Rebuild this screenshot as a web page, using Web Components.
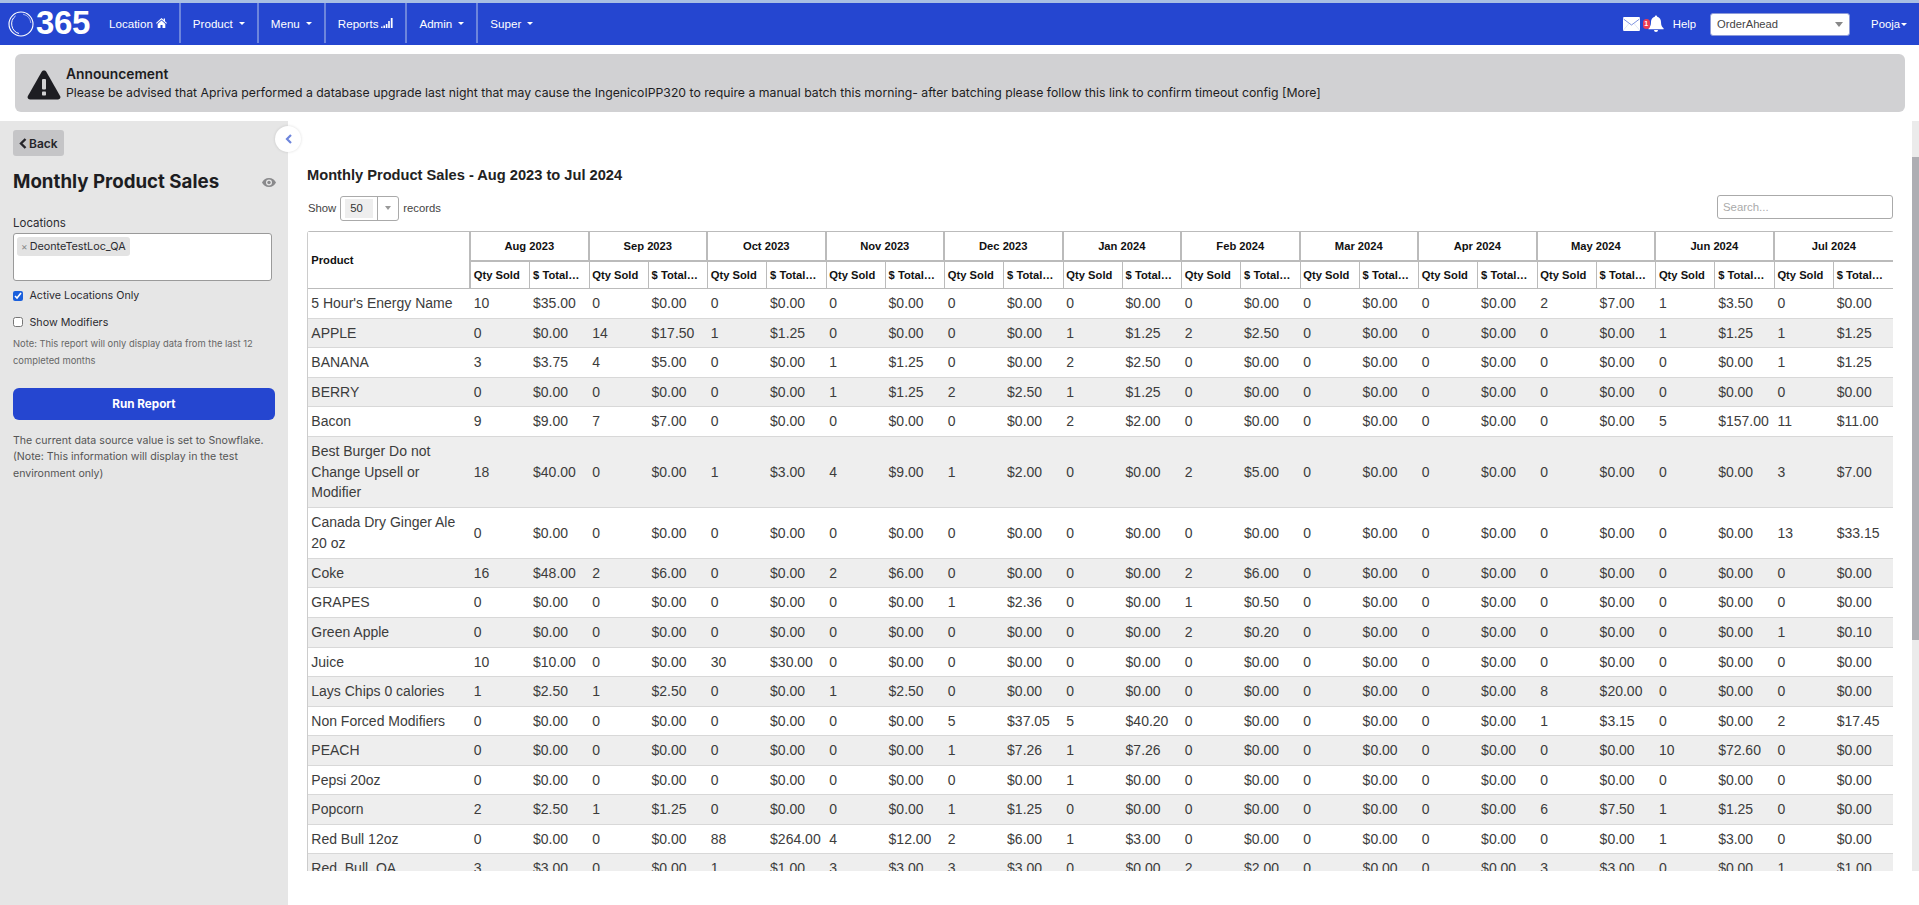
<!DOCTYPE html>
<html lang="en"><head><meta charset="utf-8"><title>Monthly Product Sales</title>
<style>
html,body{margin:0;padding:0;background:#fff;overflow:hidden}
body{font-family:"Liberation Sans",Arial,sans-serif}
</style></head>
<body>
<app-shell>
  <app-navbar slot="nav">
    <nav-link slot="links" icon="home">Location</nav-link>
    <nav-link slot="links" caret>Product</nav-link>
    <nav-link slot="links" caret>Menu</nav-link>
    <nav-link slot="links" icon="bars">Reports</nav-link>
    <nav-link slot="links" caret>Admin</nav-link>
    <nav-link slot="links" caret last>Super</nav-link>
  </app-navbar>
  <announcement-banner slot="notice" heading="Announcement">Please be advised that Apriva performed a database upgrade last night that may cause the IngenicoIPP320 to require a manual batch this morning- after batching please follow this link to confirm timeout config [More]</announcement-banner>
  <report-sidebar slot="side"></report-sidebar>
  <report-main slot="main"></report-main>
</app-shell>
<script>
function def(name, css, html, init){
  customElements.define(name, class extends HTMLElement{
    connectedCallback(){
      if(this.shadowRoot) return;
      const r=this.attachShadow({mode:'open'});
      r.innerHTML='<style>'+css+'</style>'+(typeof html==='function'?html(this):html);
      if(init) init(this,r);
    }
  });
}
def('app-shell',`
:host{display:flex;flex-direction:column;width:1919px;height:905px;overflow:hidden;background:#fff}
.body{flex:1;display:flex;min-height:0;position:relative}
`,`<slot name="nav"></slot><slot name="notice"></slot><div class="body"><slot name="side"></slot><slot name="main"></slot><collapse-button></collapse-button></div>`);

def('collapse-button',`
:host{position:absolute;left:275px;top:5px;width:26px;height:26px;border-radius:50%;background:#fff;box-shadow:0 0 3px rgba(0,0,0,.14);display:flex;align-items:center;justify-content:center}
svg{display:block;margin-left:1px}
`,`<svg width="8" height="10" viewBox="0 0 8 10"><polyline points="6,1 2,5 6,9" fill="none" stroke="#6d85dc" stroke-width="2.2"/></svg>`);

def('app-navbar',`
:host{display:flex;align-items:stretch;height:42px;border-top:3px solid #a9bfe3;background:#2546d0;color:#fff;font:11.3px "Liberation Sans",Arial,sans-serif;box-sizing:content-box}
.logo{width:97px;display:flex;align-items:center;padding-left:8px;box-sizing:border-box;gap:2px}
.logo span{font:bold 33px/1 "Liberation Sans",Arial,sans-serif;letter-spacing:-.4px;margin-top:-4px}
.links{display:flex;align-items:stretch;height:40px}
.sp{flex:1}
.right{display:flex;align-items:center;height:42px}
.mail{margin-left:0;display:block}
.bell{position:relative;width:16px;height:17px;margin-left:8px;margin-top:-2px}
.badge{position:absolute;left:-5px;top:4px;width:7px;height:10px;border-radius:3.5px;background:#ee3b52;color:#fff;font:bold 7px/10px "Liberation Sans",Arial,sans-serif;text-align:center}
.help{margin-left:9px;font-size:11.4px}
.sel{margin-left:14px;width:140px;height:23px;background:#fff;border:1px solid #8d9bd9;border-radius:3px;box-sizing:border-box;color:#444;display:flex;align-items:center;justify-content:space-between;padding:0 6px 0 6px;font-size:11.2px}
.sel i{width:0;height:0;border:4px solid transparent;border-top:5px solid #888;border-bottom:0}
.user{margin-left:21px;margin-right:12px;display:flex;align-items:center;gap:1px;font-size:11.3px}
.user i{width:0;height:0;border:3px solid transparent;border-top:3px solid #fff;border-bottom:0}
`,`<div class="logo"><svg width="26" height="26" viewBox="0 0 26 26" fill="none" stroke="#fff"><circle cx="13" cy="13" r="12" stroke-width="1.1"/><path d="M7.500 5A10 10 0 0 0 11 22.500" stroke-width="1"/><path d="M15 3.200A10 10 0 0 1 22.800 12" stroke-width=".7" opacity=".8"/></svg><span>365</span></div>
<div class="links"><slot name="links"></slot></div><div class="sp"></div>
<div class="right">
<svg class="mail" width="17" height="14" viewBox="0 0 17 14"><rect width="17" height="14" rx="1.2" fill="#fff"/><polyline points="0.5,2 8.5,8 16.5,2" fill="none" stroke="#6d85dc" stroke-width=".9"/><path d="M.5 13L6 6.5M16.5 13L11 6.5" stroke="#c5cfef" stroke-width=".5"/></svg>
<div class="bell"><svg width="16" height="17" viewBox="0 0 16 17"><path d="M8 0.5a1.2 1.2 0 0 1 1.2 1.3C11.8 2.4 13 4.6 13 7c0 3.6 1 4.8 2.6 6.3v.9H.4v-.9C2 11.8 3 10.6 3 7c0-2.4 1.2-4.6 3.8-5.2A1.2 1.2 0 0 1 8 .5z" fill="#fff"/><path d="M6 15h4a2 2 0 0 1-4 0z" fill="#fff"/></svg><div class="badge">1</div></div>
<span class="help">Help</span>
<div class="sel"><span>OrderAhead</span><i></i></div>
<div class="user"><span>Pooja</span><i></i></div>
</div>`);

def('nav-link',`
:host{display:flex;align-items:center;padding:0 12px 0 12px;border-right:2px solid #6d85dc;gap:3px;font-size:11.6px;white-space:nowrap}
:host([last]){border-right:0}
.caret{width:0;height:0;border:3px solid transparent;border-top:3px solid #fff;border-bottom:0;margin-left:3px}
svg{display:block}
`,h=>{
 let x='<slot></slot>';
 if(h.hasAttribute('caret')) x+='<i class="caret"></i>';
 if(h.getAttribute('icon')==='home') x+='<svg width="11" height="10" viewBox="0 0 11 10"><path d="M5.5 0L0 5l.7.7L5.5 1.500l4.800 4.200.7-.7-2-1.800V.6H7.700v1.300zM1.700 6v4h2.800V7h2v3h2.800V6L5.500 2.600z" fill="#fff"/></svg>';
 if(h.getAttribute('icon')==='bars') x+='<svg width="12" height="10" viewBox="0 0 12 10" fill="#fff"><rect x="0" y="8.500" width="1.600" height="1.500" opacity=".85"/><rect x="2.400" y="7.500" width="1.600" height="2.500"/><rect x="4.800" y="6" width="1.600" height="4"/><rect x="7.200" y="3" width="1.600" height="7"/><rect x="9.800" y="0" width="1.800" height="10"/></svg>';
 return x;
});

def('announcement-banner',`
:host{display:flex;align-items:center;height:58px;margin:9px 14px 9px 15px;background:#d1d1d3;border-radius:6px;padding-left:12px;box-sizing:border-box;color:#1d1d22;font-family:Inter,"Liberation Sans",sans-serif}
svg{flex:none;margin-right:5px;margin-top:3px}
h4{margin:0 0 1px;font-size:13.8px;font-weight:600;line-height:18px}
div{font-size:12.25px;line-height:18px;white-space:nowrap}
`,h=>`<svg width="34" height="31" viewBox="0 0 34 31"><path d="M17 1.500c1 0 1.800.5 2.300 1.300l13.800 24.300c1 1.800-.2 3.400-2.200 3.400H3.100c-2 0-3.200-1.600-2.200-3.400L14.700 2.800c.5-.8 1.300-1.300 2.300-1.300z" fill="#1d1d22"/><rect x="15" y="10" width="4" height="10.500" rx="1" fill="#d1d1d3"/><rect x="15" y="22.500" width="4" height="4" rx=".8" fill="#d1d1d3"/></svg><section><h4>${h.getAttribute('heading')}</h4><div><slot></slot></div></section>`);

def('report-sidebar',`
:host{display:block;flex:none;width:288px;height:784px;background:#e6e6e6;box-sizing:border-box;padding:9px 13px;color:#2b2b30;font:12px Inter,"Liberation Sans",sans-serif}
.back{display:inline-flex;align-items:center;gap:2px;height:26px;width:51px;box-sizing:border-box;padding-left:6px;background:#c5c5c7;border-radius:3px;font-weight:600;font-size:12px;color:#25252a}
h1{display:flex;justify-content:space-between;align-items:center;margin:14px -1px 0 0;font-size:18.7px;line-height:24px;font-weight:700;color:#1d1d22}
label.t{display:block;margin-top:22px;font-size:11.500px;line-height:15px}
.box{margin-top:1.500px;width:259px;height:48px;background:#fff;border:1px solid #9a9a9a;border-radius:3px;box-sizing:border-box;padding:3px}
.tag{display:inline-flex;align-items:center;height:19px;padding:0 4px;background:#e3e3e3;border-radius:3px;font-size:10.8px;color:#2b2b30;gap:2px}
.tag b{color:#888;font-weight:400;font-size:10px}
.chk{display:flex;align-items:center;gap:6.500px;height:16px;font-size:10.7px}
.chk input{width:10px;height:10px;margin:0;accent-color:#1a5fdc}
.c1{margin-top:7px}.c2{margin-top:10.500px}
.note{margin:4.500px 0 0;font-size:9.4px;line-height:17px;color:#666}
.run{display:block;margin-top:19.500px;height:32px;width:262px;line-height:32px;text-align:center;background:#2546d0;color:#fff;font-weight:700;font-size:11.7px;border-radius:6px}
.info{margin:12.700px 0 0;font-size:10.6px;line-height:16.500px;color:#555;width:262px}
`,`<div class="back"><svg width="8" height="11" viewBox="0 0 8 11"><polyline points="6.500,1 2,5.500 6.500,10" fill="none" stroke="#25252a" stroke-width="2.400"/></svg><span>Back</span></div>
<h1><span>Monthly Product Sales</span><svg width="14" height="9" viewBox="0 0 14 9"><path d="M7 0C3.800 0 1.200 1.900 0 4.500 1.200 7.100 3.800 9 7 9s5.800-1.900 7-4.500C12.800 1.900 10.200 0 7 0zm0 7.500a3 3 0 1 1 0-6 3 3 0 0 1 0 6z" fill="#8a8a8c"/><circle cx="7" cy="4.500" r="1.700" fill="#8a8a8c"/></svg></h1>
<label class="t">Locations</label>
<div class="box"><span class="tag"><b>×</b>DeonteTestLoc_QA</span></div>
<label class="chk c1"><input type="checkbox" checked><span>Active Locations Only</span></label>
<label class="chk c2"><input type="checkbox"><span>Show Modifiers</span></label>
<p class="note">Note: This report will only display data from the last 12 completed months</p>
<div class="run">Run Report</div>
<p class="info">The current data source value is set to Snowflake. (Note: This information will display in the test environment only)</p>`);

def('report-main',`
:host{display:flex;flex:1;min-width:0;height:750px;font-family:"Liberation Sans",Arial,sans-serif}
.col{flex:1;min-width:0;display:flex;flex-direction:column;padding:44px 19px 0 19px;box-sizing:border-box}
h2{margin:0;font-size:14.65px;line-height:20px;font-weight:700;color:#222}
.ctl{display:flex;justify-content:space-between;align-items:flex-start;margin-top:10px;height:26px;font-size:11.300px;color:#444}
.len{display:flex;align-items:center;height:26px;gap:4px;margin-left:1px}
.dd{display:flex;align-items:center;width:59px;height:25px;box-sizing:border-box;border:1px solid #aaa;border-radius:3px;background:#fff}
.dd .v{width:28px;height:19px;line-height:18px;margin-left:4px;background:#eee;padding-left:5px;box-sizing:border-box;color:#333}
.dd .a{margin-left:4px;border-left:1px solid #aaa;height:23px;flex:1;display:flex;align-items:center;justify-content:center}
.dd i{width:0;height:0;border:3px solid transparent;border-top:4px solid #999;border-bottom:0}
.search{width:176px;height:24px;box-sizing:border-box;border:1px solid #aaa;border-radius:3px;padding-left:5px;line-height:22px;color:#aaa;font-size:11.400px;background:#fff}
.wrap{margin-top:10px;flex:1;min-height:0;overflow:hidden}
.track{flex:none;width:7px;height:750px;background:#ebebeb;padding-top:36px;box-sizing:border-box}
.thumb{height:483px;background:#aeaeb3}
`,`<div class="col"><h2>Monthly Product Sales - Aug 2023 to Jul 2024</h2>
<div class="ctl"><div class="len"><span>Show</span><div class="dd"><span class="v">50</span><span class="a"><i></i></span></div><span>records</span></div><div class="search">Search...</div></div>
<div class="wrap"><sales-table></sales-table></div></div><div class="track"><div class="thumb"></div></div>`);

const months=['Aug 2023','Sep 2023','Oct 2023','Nov 2023','Dec 2023','Jan 2024','Feb 2024','Mar 2024','Apr 2024','May 2024','Jun 2024','Jul 2024'];
const rows=[
["5 Hour's Energy Name",{0:[10,'35.00'],9:[2,'7.00'],10:[1,'3.50']}],
["APPLE",{1:[14,'17.50'],2:[1,'1.25'],5:[1,'1.25'],6:[2,'2.50'],10:[1,'1.25'],11:[1,'1.25']}],
["BANANA",{0:[3,'3.75'],1:[4,'5.00'],3:[1,'1.25'],5:[2,'2.50'],11:[1,'1.25']}],
["BERRY",{3:[1,'1.25'],4:[2,'2.50'],5:[1,'1.25']}],
["Bacon",{0:[9,'9.00'],1:[7,'7.00'],5:[2,'2.00'],10:[5,'157.00'],11:[11,'11.00']}],
["Best Burger Do not Change Upsell or Modifier",{0:[18,'40.00'],2:[1,'3.00'],3:[4,'9.00'],4:[1,'2.00'],6:[2,'5.00'],11:[3,'7.00']},71],
["Canada Dry Ginger Ale 20 oz",{11:[13,'33.15']},51],
["Coke",{0:[16,'48.00'],1:[2,'6.00'],3:[2,'6.00'],6:[2,'6.00']}],
["GRAPES",{4:[1,'2.36'],6:[1,'0.50']}],
["Green Apple",{6:[2,'0.20'],11:[1,'0.10']}],
["Juice",{0:[10,'10.00'],2:[30,'30.00']}],
["Lays Chips 0 calories",{0:[1,'2.50'],1:[1,'2.50'],3:[1,'2.50'],9:[8,'20.00']}],
["Non Forced Modifiers",{4:[5,'37.05'],5:[5,'40.20'],9:[1,'3.15'],11:[2,'17.45']}],
["PEACH",{4:[1,'7.26'],5:[1,'7.26'],10:[10,'72.60']}],
["Pepsi 20oz",{5:[1,'0.00']}],
["Popcorn",{0:[2,'2.50'],1:[1,'1.25'],4:[1,'1.25'],9:[6,'7.50'],10:[1,'1.25']}],
["Red Bull 12oz",{2:[88,'264.00'],3:[4,'12.00'],4:[2,'6.00'],5:[1,'3.00'],10:[1,'3.00']}],
["Red_Bull_QA",{0:[3,'3.00'],2:[1,'1.00'],3:[3,'3.00'],4:[3,'3.00'],6:[2,'2.00'],9:[3,'3.00'],11:[1,'1.00']}]
];
def('sales-table',`
:host{display:block;width:1586px}
table{width:1586px;table-layout:fixed;border-collapse:separate;border-spacing:0;border:solid #ccc;border-width:1px 1px 0 1px;border-top-color:#bbb;border-radius:3px 3px 0 0;font-family:"Liberation Sans",Arial,sans-serif}
th{font-size:11.200px;font-weight:700;color:#111;background:#fff;padding:0 3px;white-space:nowrap;overflow:hidden;text-align:left;border-bottom:1px solid #bbb}
thead tr:first-child th{height:28px;text-align:center;border-bottom:2px solid #bbb;border-right:2px solid #bbb}
thead tr:first-child th.p{text-align:left;padding-left:3.3px;border-bottom:1px solid #bbb}
thead tr:first-child th.e{border-right:0}
thead tr:nth-child(2) th{height:26.3px;border-right:1px solid #bbb;padding-left:2.8px}
thead tr:nth-child(2) th.e{border-right:0}
td{font-size:14px;line-height:20.53px;color:#3c3c3c;padding:4px 3px 4px 2.8px;border-bottom:1px solid #d8d8d8;vertical-align:middle;white-space:nowrap}
td.n{white-space:normal;padding-left:3.3px;padding-right:10px}
tr.m td.n{line-height:20.8px;padding-top:3.3px;padding-bottom:3.3px}
tbody tr:nth-child(even) td{background:#eee}
`,()=>{
 let c='<colgroup><col style="width:163px">'+months.map(()=>'<col style="width:59.25px"><col style="width:59.25px">').join('')+'</colgroup>';
 let h='<thead><tr><th class="p" rowspan="2">Product</th>'+months.map((m,i)=>`<th colspan="2"${i==11?' class="e"':''}>${m}</th>`).join('')+'</tr><tr>'+months.map((m,i)=>`<th>Qty Sold</th><th${i==11?' class="e"':''}>$ Total…</th>`).join('')+'</tr></thead>';
 let b='<tbody>'+rows.map(r=>'<tr'+(r[2]?` class="m" style="height:${r[2]}px"`:'')+'><td class="n">'+r[0]+'</td>'+months.map((m,i)=>{const v=r[1][i]||[0,'0.00'];return `<td>${v[0]}</td><td>$${v[1]}</td>`}).join('')+'</tr>').join('')+'</tbody>';
 return '<table>'+c+h+b+'</table>';
});
</script>
</body></html>
